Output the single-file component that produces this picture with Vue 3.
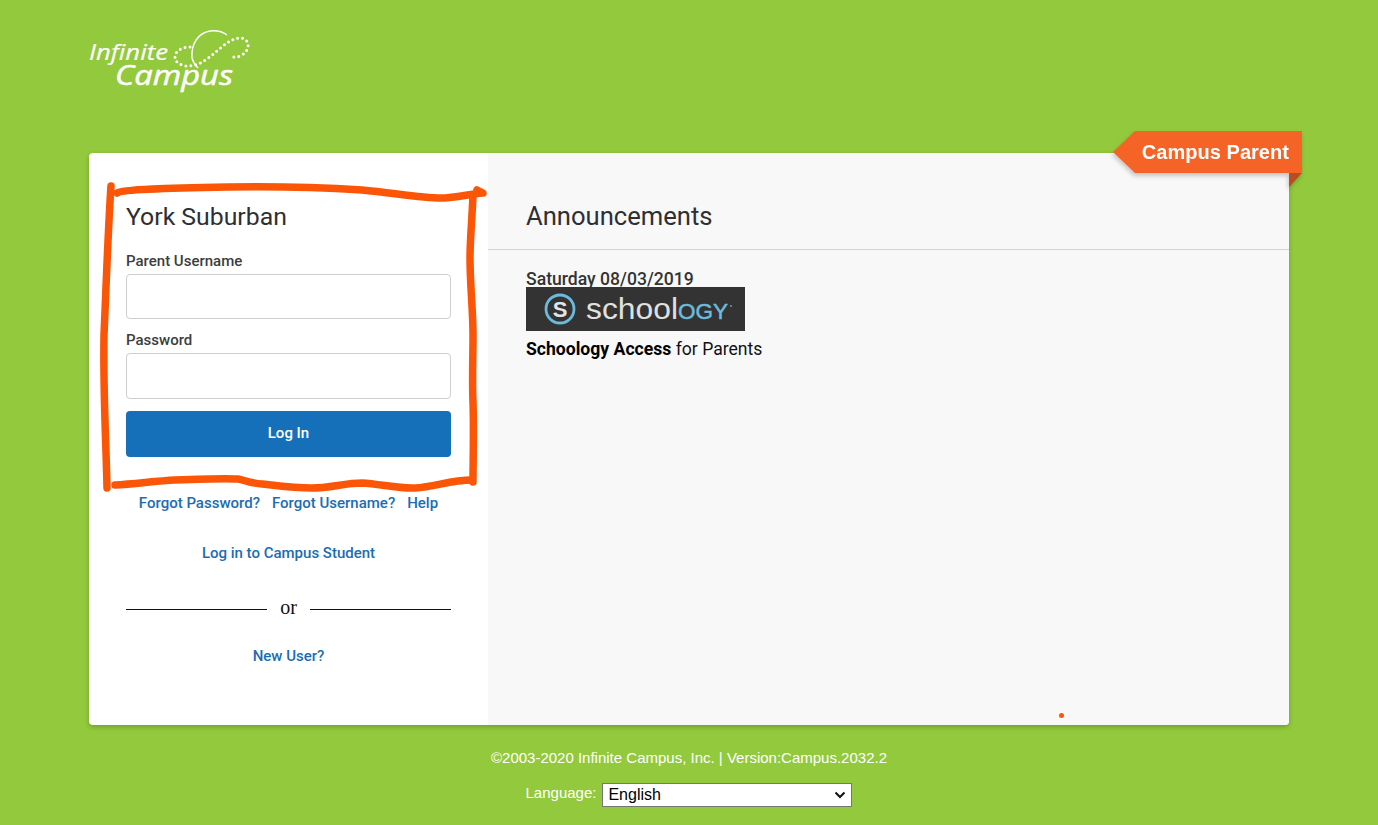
<script setup>
const links = ['Forgot Password?', 'Forgot Username?', 'Help']
</script>

<template>
  <div class="page">
    <header class="top">
      <svg class="logo" width="170" height="75" viewBox="85 25 170 75" role="img" aria-label="Infinite Campus">
        <text x="89" y="60" class="logo-a" textLength="79" lengthAdjust="spacingAndGlyphs">Infinite</text>
        <text x="115" y="85" class="logo-b" textLength="118" lengthAdjust="spacingAndGlyphs">Campus</text>
        <path class="arc" d="M192 58C191 44 198 33 210 31C217 30 223 32 227 35M192 58C193 62 195 65 198 68" />
        <path class="dots" d="M190 47C182 47 175 51 175 57C175 63 182 66 188 66C204 66 216 50 227 43C234 38 242 36 246 40C250 45 248 51 242 55C239 57 236 57 233 57" />
      </svg>
    </header>

    <main class="card">
      <section class="login">
        <h1 class="district">York Suburban</h1>
        <form class="form" @submit.prevent>
          <label class="label" for="user">Parent Username</label>
          <input id="user" class="input" type="text" />
          <label class="label second" for="pass">Password</label>
          <input id="pass" class="input tall" type="password" />
          <button class="submit" type="submit">Log In</button>
        </form>
        <nav class="links">
          <a v-for="l in links" :key="l" href="#">{{ l }}</a>
        </nav>
        <a class="student" href="#">Log in to Campus Student</a>
        <div class="or"><span class="rule"></span><span>or</span><span class="rule"></span></div>
        <a class="newuser" href="#">New User?</a>
      </section>

      <section class="news">
        <h2 class="news-title">Announcements</h2>
        <div class="news-body">
          <div class="date">Saturday 08/03/2019</div>
          <svg class="schoology" width="219" height="44" viewBox="0 0 219 44" role="img" aria-label="Schoology">
            <rect width="219" height="44" fill="#333333" />
            <circle cx="34" cy="22" r="14" fill="none" stroke="#6dbbdc" stroke-width="2.8" />
            <text x="34" y="30" text-anchor="middle" class="s-mark">S</text>
            <text x="60" y="32" class="s-word" textLength="92" lengthAdjust="spacingAndGlyphs">school</text>
            <text x="152" y="32" class="s-ogy" textLength="50" lengthAdjust="spacingAndGlyphs">OGY</text>
            <circle cx="205" cy="19" r="0.8" fill="#cccccc" />
          </svg>
          <p class="access"><strong>Schoology Access</strong> for Parents</p>
        </div>
      </section>

      <div class="tag">
        <span class="tag-label">Campus Parent</span>
        <span class="tag-fold"></span>
      </div>
      <span class="dot"></span>
    </main>

    <footer class="foot">
      <div class="copy">©2003-2020 Infinite Campus, Inc. | Version:Campus.2032.2</div>
      <div class="lang">
        <label for="lang">Language:</label>
        <div class="select-wrap">
          <select id="lang" class="select"><option>English</option></select>
          <svg class="chev" width="12" height="8" viewBox="0 0 12 8" aria-hidden="true"><path d="M1.5 1.5L6 6L10.5 1.5" /></svg>
        </div>
      </div>
    </footer>

    <svg class="scribble" width="1378" height="825" viewBox="0 0 1378 825" aria-hidden="true">
      <path d="M111 186C108 230 106 290 104 335C103 390 106 440 107 488" />
      <path d="M117 193C122 189 170 188 228 187C290 186 330 188 362 190C395 193 425 199 445 198C460 197 470 194 483 193L477 190" />
      <path d="M473 195C472 220 470 240 470 258C470 285 473 310 473 335C473 360 472 380 473 402C474 430 473 460 473 482" />
      <path d="M115 485C135 484 155 481 175 480C200 479 225 478 238 479C245 480 248 483 262 484C280 486 295 488 312 488C330 488 345 483 362 483C380 484 400 489 415 488C435 487 450 480 472 480" />
    </svg>
  </div>
</template>

<style>
html, body { margin: 0; background: #93c93c; }
</style>

<style scoped>
.page {
  position: relative;
  height: 825px;
  overflow: hidden;
  background: #93c93c;
  display: flex;
  flex-direction: column;
  align-items: center;
  font-family: Roboto, "Liberation Sans", sans-serif;
}
.top { width: 1200px; height: 153px; flex: none; position: relative; }
.logo { position: absolute; left: -4px; top: 25px; }
.logo text { fill: #fff; stroke: #fff; font-family: "Open Sans", Lato, sans-serif; font-style: italic; }
.logo-a { font-size: 22px; font-weight: 400; stroke-width: .2; }
.logo-b { font-size: 28px; font-weight: 400; stroke-width: .5; }
.arc { fill: none; stroke: #fff; stroke-width: 1.4; }
.dots { fill: none; stroke: #fff; stroke-width: 3; stroke-linecap: round; stroke-dasharray: 0 5; }

.card {
  position: relative;
  width: 1200px;
  height: 572px;
  flex: none;
  display: flex;
  background: #fff;
  border-radius: 4px;
  box-shadow: 0 2px 5px rgba(0, 0, 0, .22);
}
.login {
  width: 399px;
  flex: none;
  box-sizing: border-box;
  padding: 48px 37px 0;
  display: flex;
  flex-direction: column;
  color: #333;
}
.district {
  margin: 0;
  font-size: 24.8px;
  font-weight: 400;
  line-height: 32px;
  color: #2f2f33;
}
.form { display: flex; flex-direction: column; margin-top: 17px; }
.label { font-size: 15px; font-weight: 500; line-height: 22px; height: 24px; color: #3d3d3d; }
.label.second { margin-top: 9px; height: 25px; line-height: 25px; }
.input {
  box-sizing: border-box;
  width: 100%;
  height: 45px;
  border: 1px solid #cfcfcf;
  border-radius: 4px;
  background: #fff;
  outline: none;
  padding: 0 10px;
}
.input.tall { height: 46px; }
.submit {
  height: 46px;
  margin-top: 12px;
  padding: 0 0 2px;
  border: 0;
  border-radius: 4px;
  background: #1570b9;
  color: #fff;
  font: 500 15px Roboto, sans-serif;
}
.links {
  display: flex;
  justify-content: center;
  gap: 12px;
  margin-top: 37px;
  line-height: 18px;
}
a { color: #1b6db3; font-size: 15px; font-weight: 500; text-decoration: none; }
.student { text-align: center; margin-top: 32px; line-height: 18px; }
.or {
  display: flex;
  align-items: center;
  gap: 13px;
  margin-top: 33px;
  height: 24px;
  font: 20px "Liberation Serif", serif;
  color: #111;
}
.rule { flex: 1; height: 1px; background: #111; margin-top: 4px; }
.newuser { text-align: center; margin-top: 28px; line-height: 18px; }

.news {
  flex: 1;
  background: #f8f8f8;
  border-radius: 0 4px 4px 0;
  min-width: 0;
}
.news-title {
  margin: 0;
  height: 97px;
  box-sizing: border-box;
  padding: 47px 38px 0;
  border-bottom: 1px solid #d2d2d2;
  font-size: 25.6px;
  font-weight: 400;
  line-height: 33px;
  color: #2f2f33;
}
.news-body { padding: 20px 38px 0; }
.date { font-size: 17.6px; font-weight: 500; height: 17px; line-height: 19px; color: #333; }
.schoology { display: block; }
.s-mark { fill: #e4e4e4; font: 700 22px "Liberation Sans", sans-serif; }
.s-word { fill: #e0e0e0; font: 400 29px "Liberation Sans", sans-serif; }
.s-ogy { fill: #6dbbdc; font: 400 22px "Liberation Sans", sans-serif; stroke: #6dbbdc; stroke-width: .5; }
.access { margin: 8px 0 0; font-size: 17.6px; line-height: 20px; color: #111; }
.access strong { font-weight: 700; color: #000; }

.tag {
  position: absolute;
  left: 1024px;
  top: -22px;
  width: 189px;
  height: 42px;
  filter: drop-shadow(-1px 3px 2px rgba(0, 0, 0, .2));
}
.tag-label {
  display: flex;
  align-items: center;
  justify-content: flex-end;
  box-sizing: border-box;
  height: 42px;
  padding-right: 13px;
  background: #f56326;
  clip-path: polygon(22px 0, 100% 0, 100% 100%, 22px 100%, 0 50%);
  color: #fff;
  font: 700 20px "Liberation Sans", Arial, sans-serif;
  letter-spacing: .04px;
}
.tag-fold {
  position: absolute;
  right: 0;
  top: 42px;
  width: 13px;
  height: 14px;
  background: #b94c22;
  clip-path: polygon(0 0, 100% 0, 0 100%);
}
.dot {
  position: absolute;
  left: 970px;
  top: 560px;
  width: 5px;
  height: 5px;
  border-radius: 50%;
  background: #fb5607;
}

.foot {
  display: flex;
  flex-direction: column;
  align-items: center;
  color: #fff;
  font: 15px "Liberation Sans", Arial, sans-serif;
}
.copy { margin-top: 24px; line-height: 18px; }
.lang { display: flex; align-items: center; gap: 6px; margin-top: 16px; }
.lang label { margin-top: -6px; }
.select-wrap { position: relative; display: flex; }
.select {
  box-sizing: border-box;
  width: 250px;
  height: 24px;
  padding: 0 0 2px 5px;
  appearance: none;
  border-radius: 0;
  background: #fff;
  color: #000;
  border: 1px solid #767676;
  font: 16px "Liberation Sans", Arial, sans-serif;
}
.chev { position: absolute; right: 6px; top: 8px; pointer-events: none; }
.chev path { fill: none; stroke: #111; stroke-width: 2; }

.scribble { position: absolute; left: 0; top: 0; pointer-events: none; }
.scribble path {
  fill: none;
  stroke: #fb5607;
  stroke-width: 7.5;
  stroke-linecap: round;
  stroke-linejoin: round;
}
</style>
